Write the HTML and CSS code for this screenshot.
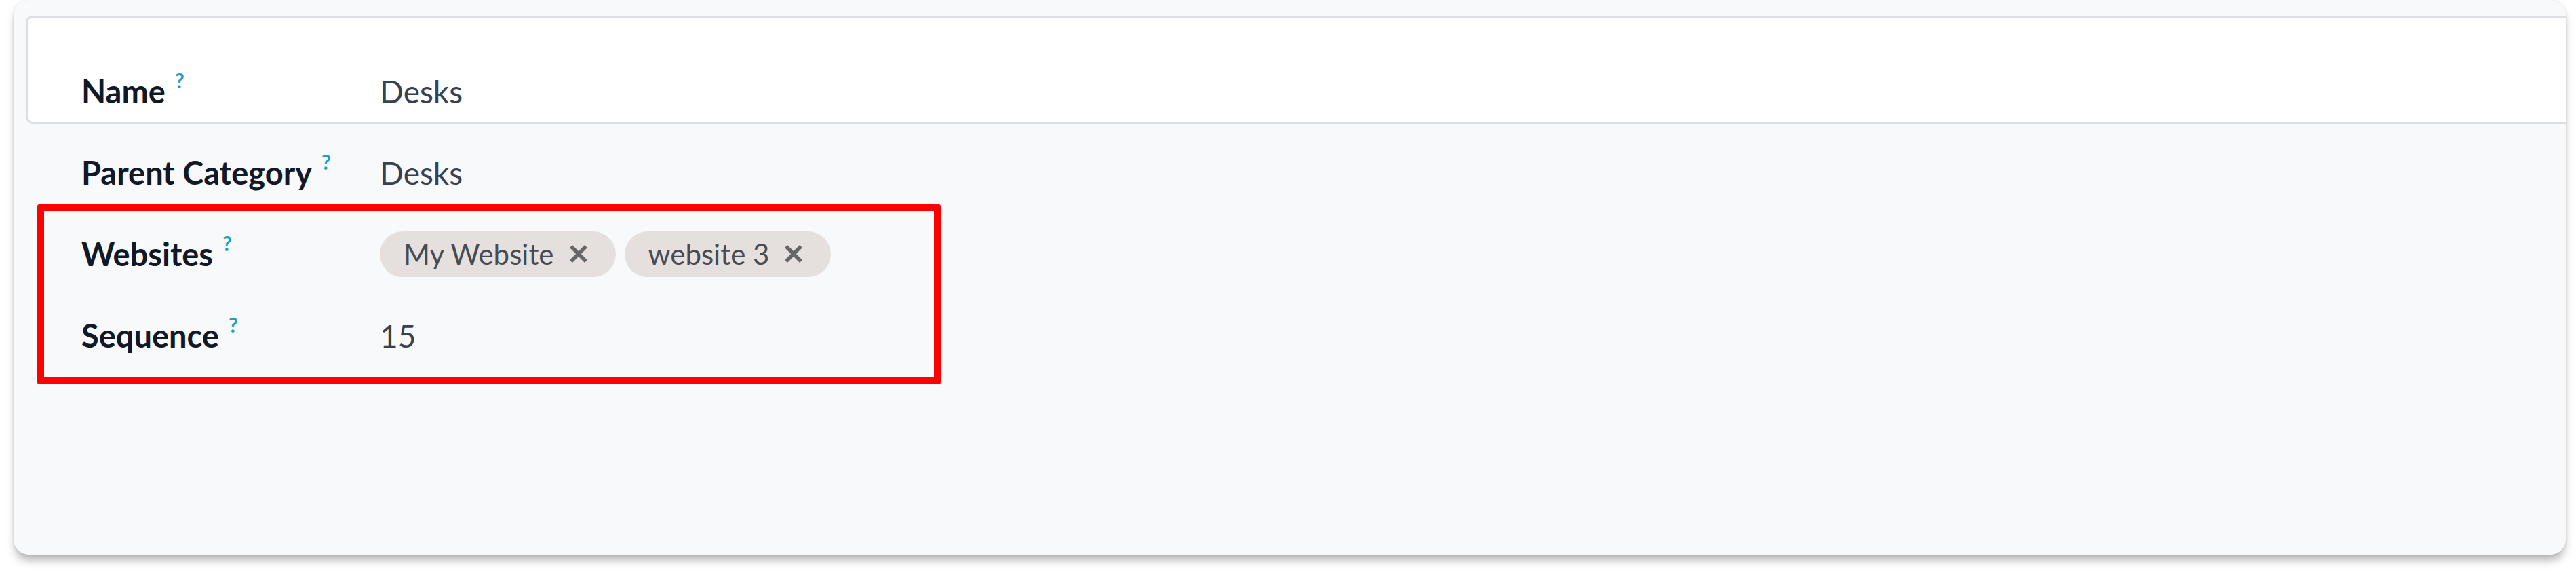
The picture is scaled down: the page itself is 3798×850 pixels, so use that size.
FILE: index.html
```html
<!DOCTYPE html>
<html lang="en">
<head>
    <meta charset="UTF-8">
    <meta name="viewport" content="width=device-width, initial-scale=1.0">
    <title>Product Category</title>
    <link rel="stylesheet" href="styles.css">
</head>
<body>
    <div class="form-sheet">
        <div class="sheet-head">
            <div class="field-row">
                <span class="field-label">Name<sup class="help">?</sup></span>
                <span class="field-value">Desks</span>
            </div>
        </div>

        <div class="sheet-body">
            <div class="field-row">
                <span class="field-label">Parent Category<sup class="help">?</sup></span>
                <span class="field-value">Desks</span>
            </div>
            <div class="field-row">
                <span class="field-label">Websites<sup class="help">?</sup></span>
                <div class="tags">
                    <span class="tag">My Website
                        <svg class="tag-remove" viewBox="0 0 28 28"><path d="M3 3 L25 25 M25 3 L3 25"/></svg>
                    </span>
                    <span class="tag">website 3
                        <svg class="tag-remove" viewBox="0 0 28 28"><path d="M3 3 L25 25 M25 3 L3 25"/></svg>
                    </span>
                </div>
            </div>
            <div class="field-row">
                <span class="field-label">Sequence<sup class="help">?</sup></span>
                <span class="field-value">15</span>
            </div>

            <!-- highlight drawn over the two fields -->
            <div class="highlight"></div>
        </div>
    </div>
</body>
</html>
```

FILE: styles.css
```css
:root {
    --label: #111827;
    --value: #374151;
    --help: #1f9ec4;
    --sheet-bg: #f8f9fa;
    --line: #dcdee1;
    --tag-bg: #e5dfdd;
}

* {
    margin: 0;
    padding: 0;
    box-sizing: border-box;
    font-family: 'Lato', 'Noto Sans', sans-serif;
}

body {
    background: #ffffff;
    width: 3798px;
    height: 850px;
    overflow: hidden;
}

.form-sheet {
    position: relative;
    margin-left: 20px;
    width: 3763px;
    height: 817px;
    background: var(--sheet-bg);
    border-radius: 22px;
    overflow: hidden;
    box-shadow: 0 11px 14px -3px rgba(0, 0, 0, 0.3), 0 0 4px rgba(0, 0, 0, 0.12);
}

.sheet-head {
    margin: 23px 0 0 18px;
    height: 159px;
    padding: 58px 0 0 79px;
    background: #ffffff;
    border: 3px solid var(--line);
    border-right: 0;
    border-radius: 10px 0 0 10px;
}

.sheet-head .field-row {
    height: 100px;
}

.sheet-body {
    padding: 12px 0 0 100px;
}

.field-row {
    display: flex;
    align-items: center;
    height: 120px;
}

.field-label {
    width: 440px;
    flex-shrink: 0;
    font-size: 47px;
    font-weight: 700;
    color: var(--label);
}

.help {
    margin-left: 14px;
    font-size: 30px;
    font-weight: 700;
    color: var(--help);
    vertical-align: 22px;
    line-height: 0;
}

.field-value {
    font-size: 46px;
    color: var(--value);
}

.tags {
    display: flex;
    gap: 13px;
}

.tag {
    display: flex;
    align-items: center;
    gap: 22px;
    height: 67px;
    padding: 0 41px 0 35px;
    border-radius: 34px;
    background: var(--tag-bg);
    font-size: 42px;
    color: #474c54;
}

.tag-remove {
    width: 28px;
    height: 28px;
    stroke: #666666;
    stroke-width: 5.5;
    fill: none;
}

.highlight {
    position: absolute;
    left: 35px;
    top: 301px;
    width: 1332px;
    height: 265px;
    border: 10px solid #ff0000;
    border-radius: 3px;
}
```
